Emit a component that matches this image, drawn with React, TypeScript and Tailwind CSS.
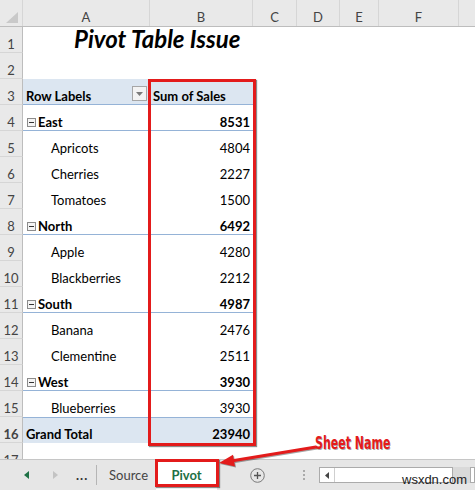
import React from "react";

type Row = { n: number; kind: "cat" | "item"; label: string; val: string };

const rows: Row[] = [
  { n: 4, kind: "cat", label: "East", val: "8531" },
  { n: 5, kind: "item", label: "Apricots", val: "4804" },
  { n: 6, kind: "item", label: "Cherries", val: "2227" },
  { n: 7, kind: "item", label: "Tomatoes", val: "1500" },
  { n: 8, kind: "cat", label: "North", val: "6492" },
  { n: 9, kind: "item", label: "Apple", val: "4280" },
  { n: 10, kind: "item", label: "Blackberries", val: "2212" },
  { n: 11, kind: "cat", label: "South", val: "4987" },
  { n: 12, kind: "item", label: "Banana", val: "2476" },
  { n: 13, kind: "item", label: "Clementine", val: "2511" },
  { n: 14, kind: "cat", label: "West", val: "3930" },
  { n: 15, kind: "item", label: "Blueberries", val: "3930" },
];

function RowNum({ n }: { n: number }) {
  return (
    <div className="w-[23px] shrink-0 h-full bg-[#e9e9e9] border-r border-b border-r-[#bdbdbd] border-b-[#d6d6d6] flex items-end justify-center pb-0 text-[13px] leading-[16px] text-[#444]">
      {n}
    </div>
  );
}

function Collapse() {
  return (
    <div className="w-[9px] h-[9px] border border-[#8c8c8c] bg-[#f4f4f4] flex items-center justify-center mr-[2px] mb-[3px]">
      <div className="w-[5px] h-px bg-[#333]" />
    </div>
  );
}

export default function App() {
  const cols = [
    { l: "A", w: "w-[127px]" },
    { l: "B", w: "w-[103px]" },
    { l: "C", w: "w-[44px]" },
    { l: "D", w: "w-[43px]" },
    { l: "E", w: "w-[39px]" },
    { l: "F", w: "w-[80px]" },
  ];
  return (
    <div className="relative w-[475px] h-[490px] overflow-hidden bg-white font-['Lato',sans-serif] text-black">
      <div className="h-[459px] overflow-hidden flex flex-col">
        {/* column header */}
        <div className="flex h-[27px] shrink-0 bg-[#e9e9e9] border-b border-[#bdbdbd]">
          <div className="w-[23px] shrink-0 border-r border-[#d6d6d6] relative">
            <svg className="absolute left-[6px] top-[12px]" width="12" height="11" viewBox="0 0 12 11">
              <polygon points="12,0 12,11 0,11" fill="#c9c9c9" />
            </svg>
          </div>
          {cols.map((c) => (
            <div
              key={c.l}
              className={`${c.w} shrink-0 border-r border-[#d6d6d6] flex items-end justify-center pb-[1px] text-[13px] leading-[16px] text-[#444]`}
            >
              {c.l}
            </div>
          ))}
          <div className="flex-1" />
        </div>

        {/* row 1 */}
        <div className="flex h-[26px] shrink-0">
          <RowNum n={1} />
          <div className="flex-1 flex items-end pl-[51px] pb-0">
            <span className="text-[24px] leading-[28px] font-bold italic">Pivot Table Issue</span>
          </div>
        </div>
        {/* row 2 */}
        <div className="flex h-[26px] shrink-0">
          <RowNum n={2} />
        </div>
        {/* row 3 pivot header */}
        <div className="flex h-[26px] shrink-0 text-[13px] leading-[16px]">
          <RowNum n={3} />
          <div className="w-[127px] shrink-0 bg-[#dce6f1] border-b border-[#95b3d7] flex items-end justify-between pl-[3px] pr-[3px] pb-0 font-bold">
            <span>Row Labels</span>
            <div className="w-[15px] h-[15px] mb-[3px] border border-[#a6a6a6] bg-[#f3f3f3] flex items-center justify-center">
              <svg width="7" height="4" viewBox="0 0 7 4">
                <polygon points="0,0 7,0 3.5,4" fill="#7a7a7a" />
              </svg>
            </div>
          </div>
          <div className="w-[103px] shrink-0 bg-[#dce6f1] border-b border-[#95b3d7] flex items-end pl-[3px] pb-0 font-bold">
            Sum of Sales
          </div>
        </div>

        {rows.map((r) => (
          <div key={r.n} className="flex h-[26px] shrink-0 text-[13px] leading-[16px]">
            <RowNum n={r.n} />
            {r.kind === "cat" ? (
              <>
                <div className="w-[127px] shrink-0 border-b border-[#95b3d7] flex items-end pl-[4px] pb-0 font-bold">
                  <Collapse />
                  <span>{r.label}</span>
                </div>
                <div className="w-[103px] shrink-0 border-b border-[#95b3d7] flex items-end justify-end pr-[3px] pb-0 font-bold">
                  {r.val}
                </div>
              </>
            ) : (
              <>
                <div className="w-[127px] shrink-0 flex items-end pl-[28px] pb-[1px]">{r.label}</div>
                <div className="w-[103px] shrink-0 flex items-end justify-end pr-[3px] pb-[1px]">{r.val}</div>
              </>
            )}
          </div>
        ))}

        {/* row 16 grand total */}
        <div className="flex h-[26px] shrink-0 text-[13px] leading-[16px] font-bold">
          <RowNum n={16} />
          <div className="w-[127px] shrink-0 bg-[#dce6f1] border-t border-[#95b3d7] flex items-end pl-[3px] pb-[1px]">
            Grand Total
          </div>
          <div className="w-[103px] shrink-0 bg-[#dce6f1] border-t border-[#95b3d7] flex items-end justify-end pr-[3px] pb-[1px]">
            23940
          </div>
        </div>
        {/* row 17 partial */}
        <div className="flex h-[26px] shrink-0">
          <RowNum n={17} />
        </div>
      </div>

      {/* sheet tab bar */}
      <div className="h-[31px] bg-[#e6e6e6] border-t border-[#c6c6c6] flex items-center text-[13px] leading-[16px]">
        <div className="w-[24px] shrink-0" />
        <svg className="shrink-0" width="5" height="8" viewBox="0 0 5 8">
          <polygon points="5,0 5,8 0,4" fill="#1e7145" />
        </svg>
        <div className="w-[24px] shrink-0" />
        <svg className="shrink-0" width="5" height="8" viewBox="0 0 5 8">
          <polygon points="0,0 0,8 5,4" fill="#c3c3c3" />
        </svg>
        <div className="w-[18px] shrink-0" />
        <span className="w-[14px] shrink-0 font-bold text-[#333] tracking-[1px]">...</span>
        <div className="w-[6px] shrink-0" />
        <div className="w-px h-[20px] bg-[#b5b5b5] shrink-0" />
        <div className="w-[12px] shrink-0" />
        <span className="w-[40px] shrink-0 text-[#444]">Source</span>
        <div className="w-[7px] shrink-0" />
        <div className="w-[61px] shrink-0 h-full bg-white flex items-center justify-center font-bold text-[#1e7145]">
          Pivot
        </div>
        <div className="w-[33px] shrink-0" />
        <svg className="shrink-0" width="15" height="15" viewBox="0 0 15 15">
          <circle cx="7.5" cy="7.5" r="6.8" fill="none" stroke="#7a7a7a" strokeWidth="1" />
          <path d="M7.5 4v7M4 7.5h7" stroke="#555" strokeWidth="1.3" />
        </svg>
        <div className="w-[38px] shrink-0" />
        <div className="w-[2px] shrink-0 flex flex-col gap-[2px]">
          <div className="w-[2px] h-[2px] bg-[#aaa]" />
          <div className="w-[2px] h-[2px] bg-[#aaa]" />
          <div className="w-[2px] h-[2px] bg-[#aaa]" />
        </div>
        <div className="w-[14px] shrink-0" />
        <div className="w-[134px] shrink-0 h-[16px] border border-[#ababab] bg-white flex">
          <div className="w-[15px] h-full border-r border-[#cfcfcf] flex items-center justify-center">
            <svg width="4" height="7" viewBox="0 0 4 7">
              <polygon points="4,0 4,7 0,3.5" fill="#444" />
            </svg>
          </div>
        </div>
        <div className="w-[17px] shrink-0 h-[16px] bg-[#d9d9d9]" />
        <div className="flex-1 h-[16px] border border-[#ababab] bg-white" />
      </div>

      {/* annotations */}
      <div className="absolute left-[148px] top-[79px] w-[108px] h-[367px] border-[3px] border-[#e31b1b] shadow-[1px_1px_1px_rgba(0,0,0,0.45)]" />
      <div className="absolute left-[155px] top-[459px] w-[64px] h-[28px] border-[3px] border-[#e31b1b] shadow-[1px_1px_1px_rgba(0,0,0,0.45)]" />
      <svg className="absolute left-0 top-0 pointer-events-none" width="475" height="490" viewBox="0 0 475 490">
        <g transform="translate(1,1)" opacity="0.35">
          <line x1="316" y1="447" x2="231" y2="461" stroke="#000" strokeWidth="3" />
          <polygon points="219,463 233,454.7 235,466.5" fill="#000" />
        </g>
        <line x1="316" y1="447" x2="231" y2="461" stroke="#e31b1b" strokeWidth="3" />
        <polygon points="219,463 233,454.7 235,466.5" fill="#e31b1b" />
      </svg>
      <div className="absolute left-[315px] top-[433px] origin-left scale-x-[0.68] text-[18px] leading-[20px] font-bold text-[#e31b1b] font-['Liberation_Sans_Narrow','DejaVu_Sans_Condensed',sans-serif] [text-shadow:1px_1px_0_rgba(0,0,0,0.35)] whitespace-nowrap">
        Sheet Name
      </div>
      <div className="absolute left-[402px] top-[472px] text-[13px] leading-[16px] text-[#222] font-['Liberation_Sans',sans-serif]">
        wsxdn.com
      </div>
    </div>
  );
}
